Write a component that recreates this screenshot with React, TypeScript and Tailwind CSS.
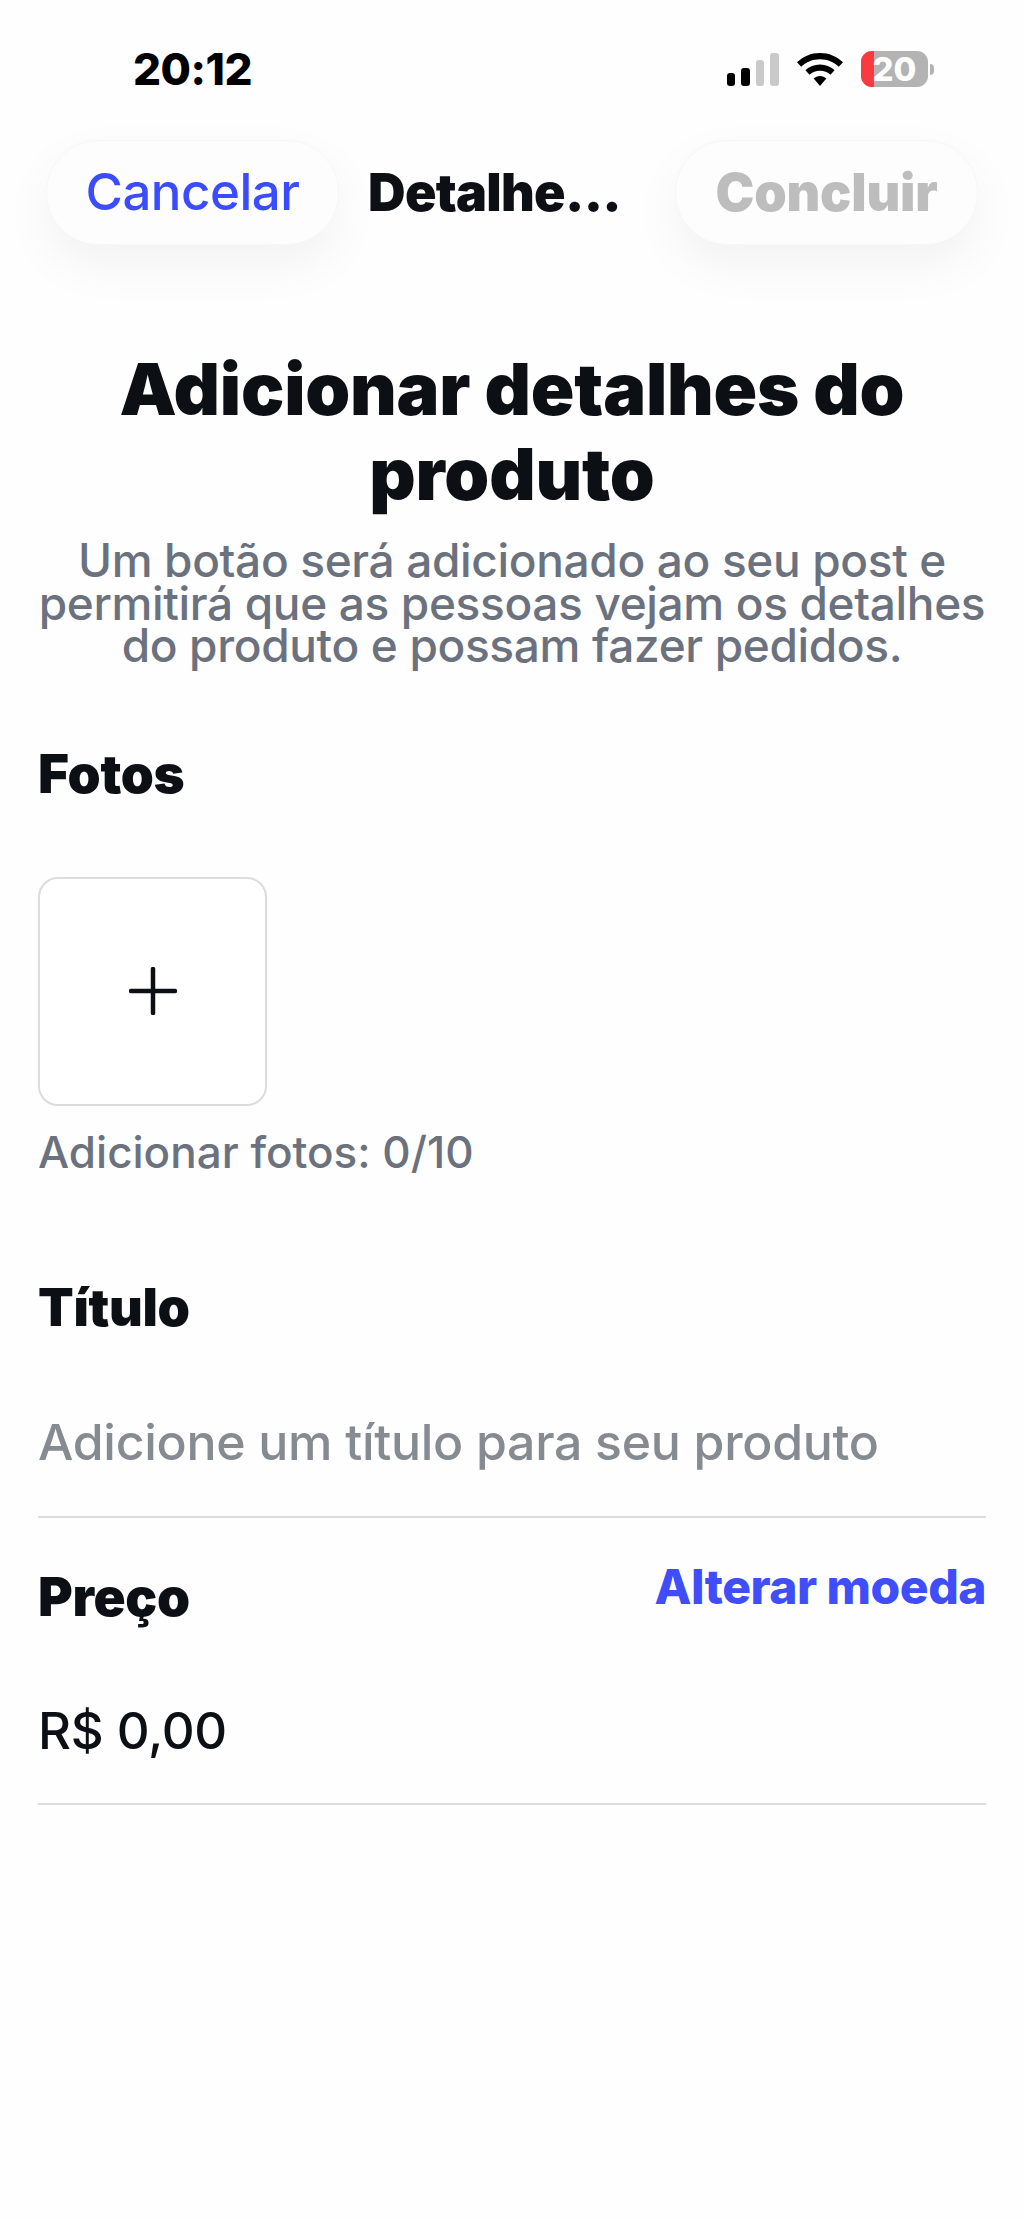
function SignalIcon() {
  return (
    <svg width="52" height="33" viewBox="0 0 52 33">
      <rect x="0" y="20" width="8" height="13" rx="3" fill="#000000" />
      <rect x="14" y="15" width="9" height="18" rx="3" fill="#000000" />
      <rect x="29" y="7" width="8" height="26" rx="3" fill="#c9c9c9" />
      <rect x="43" y="0" width="9" height="33" rx="3" fill="#c9c9c9" />
    </svg>
  );
}

function WifiIcon() {
  return (
    <svg width="46" height="33" viewBox="0 0 46 33">
      <path d="M23 0C14 0 6.400 3.300 0 9.300L4.200 13.800C9.300 9 15.700 6.300 23 6.300C30.300 6.300 36.700 9 41.800 13.800L46 9.300C39.600 3.300 32 0 23 0Z" fill="#000000" />
      <path d="M23 11.500C17.300 11.500 12.300 13.600 8.400 17.300L12.600 21.800C15.300 19.200 18.900 17.700 23 17.700C27.100 17.700 30.700 19.200 33.400 21.800L37.600 17.300C33.700 13.600 28.700 11.500 23 11.500Z" fill="#000000" />
      <path d="M23 23C20.500 23 18.400 23.900 16.700 25.500L23 33L29.300 25.500C27.600 23.900 25.500 23 23 23Z" fill="#000000" />
    </svg>
  );
}

function Battery() {
  return (
    <div className="flex items-center gap-[2px]">
      <div className="relative flex h-[36px] w-[67px] items-center justify-center rounded-[11px] bg-[#b3b3b3]">
        <div className="absolute inset-y-0 left-0 w-[13px] rounded-l-[11px] bg-[#fb3a40]" />
        <span className="relative text-[33px] leading-none font-extrabold text-white">20</span>
      </div>
      <div className="h-[11px] w-[4px] rounded-r-full bg-[#b3b3b3]" />
    </div>
  );
}

function PlusIcon() {
  return (
    <svg width="48" height="48" viewBox="0 0 48 48" fill="none" stroke="#0c1014" strokeWidth="4.500" strokeLinecap="round">
      <path d="M2 24H46" />
      <path d="M24 2V46" />
    </svg>
  );
}

export default function App() {
  return (
    <div className="h-[2219px] w-[1024px] overflow-hidden bg-[#fefefe] font-['Inter',sans-serif] text-[#0c1014]">
      <div className="flex h-[140px] items-start justify-between pt-[49px] pr-[90px] pl-[133px]">
        <span className="text-[44px] leading-[40px] font-extrabold tracking-[-0.5px] text-black">20:12</span>
        <div className="mt-[2px] flex items-center">
          <SignalIcon />
          <div className="mx-[18px]">
            <WifiIcon />
          </div>
          <Battery />
        </div>
      </div>

      <div className="flex h-[105px] items-center pr-[46px] pl-[46px]">
        <div className="flex h-[105px] w-[293px] items-center justify-center rounded-[52px] border border-[#f7f7f7] bg-[#fdfdfd] shadow-[0_20px_50px_rgba(0,0,0,0.05)]">
          <span className="text-[51px] font-medium tracking-[-0.5px] text-[#3b4cff]">Cancelar</span>
        </div>
        <span className="ml-[29px] text-[52px] font-black tracking-[-0.7px]">Detalhe...</span>
        <div className="ml-auto flex h-[105px] w-[303px] items-center justify-center rounded-[52px] border border-[#f7f7f7] bg-[#fdfdfd] shadow-[0_20px_50px_rgba(0,0,0,0.05)]">
          <span className="text-[52px] font-black tracking-[-0.2px] text-[#bdbdbd]">Concluir</span>
        </div>
      </div>

      <div className="px-[38px]">
        <h1 className="mt-[101px] text-center text-[72px] leading-[85px] font-black tracking-[-0.2px]">
          Adicionar detalhes do
          <br />
          produto
        </h1>
        <p className="mt-[23px] text-center text-[46px] leading-[42.500px] font-medium tracking-[-0.35px] text-[#6b727e]">
          Um botão será adicionado ao seu post e
          <br />
          permitirá que as pessoas vejam os detalhes
          <br />
          do produto e possam fazer pedidos.
        </p>

        <h2 className="mt-[79px] text-[53px] leading-[56px] font-black tracking-[-0.3px]">Fotos</h2>
        <div className="mt-[75px] flex h-[229px] w-[229px] items-center justify-center rounded-[20px] border-2 border-[#dcdcdc] bg-white">
          <PlusIcon />
        </div>
        <p className="mt-[20px] text-[44px] leading-[52px] font-medium text-[#6b727e]">Adicionar fotos: 0/10</p>

        <h2 className="mt-[102px] text-[52px] leading-[56px] font-black tracking-[-0.3px]">Título</h2>
        <div className="mt-[80px] border-b-2 border-[#dcdcdc] pb-[48px] text-[50px] leading-[52px] font-medium tracking-[-0.3px] text-[#868a91]">
          Adicione um título para seu produto
        </div>

        <div className="mt-[43px] flex items-start justify-between">
          <h2 className="mt-[8px] text-[53px] leading-[56px] font-black tracking-[-0.3px]">Preço</h2>
          <span className="text-[48px] leading-[52px] font-extrabold tracking-[-0.5px] text-[#3f4dfa]">Alterar moeda</span>
        </div>
        <div className="mt-[80px] border-b-2 border-[#dcdcdc] pb-[46px] text-[51px] leading-[52px] font-medium tracking-[-0.3px]">R$ 0,00</div>
      </div>
    </div>
  );
}
